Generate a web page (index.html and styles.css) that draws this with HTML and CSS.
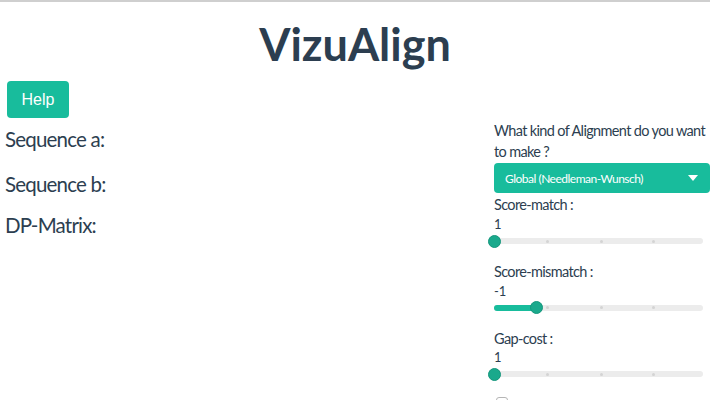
FILE: index.html
```html
<!DOCTYPE html>
<html>
<head>
<meta charset="utf-8">
<link rel="stylesheet" href="styles.css">
</head>
<body>
<h1 class="title">VizuAlign</h1>
<div class="main">
  <div class="left">
    <button class="help-btn">Help</button>
    <div class="seq seq-a">Sequence a:</div>
    <div class="seq seq-b">Sequence b:</div>
    <div class="seq seq-dp">DP-Matrix:</div>
  </div>
  <div class="right">
    <div class="question">What kind of Alignment do you want to make ?</div>
    <div class="select">
      <span>Global (Needleman-Wunsch)</span>
      <svg class="caret" width="10" height="6" viewBox="0 0 10 6"><path d="M0 0 L10 0 L5 6 Z" fill="#fff"/></svg>
    </div>
    <div class="field first">
      <div class="label">Score-match :</div>
      <div class="value">1</div>
      <div class="slider">
        <div class="track"></div>
        <span class="tick t1"></span><span class="tick t2"></span><span class="tick t3"></span>
        <span class="handle" style="left:0.8px"></span>
      </div>
    </div>
    <div class="field">
      <div class="label">Score-mismatch :</div>
      <div class="value">-1</div>
      <div class="slider">
        <div class="track"></div>
        <span class="fill" style="width:42px"></span>
        <span class="tick t1"></span><span class="tick t2"></span><span class="tick t3"></span>
        <span class="handle" style="left:42.2px"></span>
      </div>
    </div>
    <div class="field">
      <div class="label">Gap-cost :</div>
      <div class="value">1</div>
      <div class="slider">
        <div class="track"></div>
        <span class="tick t1"></span><span class="tick t2"></span><span class="tick t3"></span>
        <span class="handle" style="left:0.8px"></span>
      </div>
    </div>
    <div class="check"><span class="box"></span></div>
  </div>
</div>
</body>
</html>
```

FILE: styles.css
```css
html, body {
  margin: 0;
  padding: 0;
  background: #fff;
  overflow: hidden;
}
body {
  border-top: 2px solid #cfcfcf;
  font-family: Lato, "Open Sans", sans-serif;
  color: #2c3e50;
}
.title {
  margin: 17px 0 0;
  height: 50px;
  line-height: 50px;
  font-size: 45px;
  font-weight: 700;
  text-align: center;
  color: #2c3e50;
}
.main {
  display: grid;
  grid-template-columns: 1fr 216px;
  margin-top: 12px;
}
.left {
  padding-left: 5px;
  display: flex;
  flex-direction: column;
  align-items: flex-start;
}
.help-btn {
  margin-left: 2px;
  width: 62px;
  height: 37px;
  border: none;
  border-radius: 4px;
  background: #18bc9c;
  color: #fff;
  font-family: "Liberation Sans", Arial, sans-serif;
  font-size: 16px;
  padding: 0;
}
.seq {
  font-size: 20.5px;
  line-height: 24px;
  letter-spacing: -0.8px;
  color: #2c3e50;
}
.seq-a { margin-top: 8.8px; }
.seq-b { margin-top: 21px; }
.seq-dp { margin-top: 17.6px; }

.right {
  padding-top: 39px;
  font-size: 14.5px;
  letter-spacing: -0.65px;
}
.question {
  line-height: 21.4px;
}
.select {
  margin-top: 0.5px;
  height: 29.4px;
  border-radius: 4px;
  background: #18bc9c;
  color: #fff;
  display: flex;
  align-items: center;
  justify-content: space-between;
  padding: 0 12px 0 11px;
  font-size: 12px;
  letter-spacing: -0.5px;
}
.caret { display: block; }
.field {
  margin-top: 11.9px;
}
.field.first {
  margin-top: 1.5px;
}
.label {
  line-height: 21.7px;
}
.value {
  font-size: 13px;
  line-height: 17.1px;
  letter-spacing: 0;
}
.slider {
  position: relative;
  width: 209px;
  height: 16px;
  padding-top: 5px;
  box-sizing: border-box;
}
.track {
  height: 6px;
  border-radius: 3px;
  background: #ececec;
}
.fill {
  position: absolute;
  left: 0;
  top: 5px;
  height: 6px;
  border-radius: 3px 0 0 3px;
  background: #18bc9c;
}
.tick {
  position: absolute;
  top: 6.5px;
  width: 3px;
  height: 3px;
  border-radius: 50%;
  background: #d4d4d4;
}
.t1 { left: 52.2px; }
.t2 { left: 105.5px; }
.t3 { left: 157.8px; }
.handle {
  position: absolute;
  top: 1.5px;
  width: 13px;
  height: 13px;
  margin-left: -6.5px;
  box-sizing: border-box;
  border-radius: 50%;
  background: #1aa98c;
  border: 1px solid #15967c;
}
.check {
  display: flex;
  margin-top: 15.1px;
  padding-left: 2px;
}
.box {
  width: 12px;
  height: 12px;
  box-sizing: border-box;
  border: 1px solid #b5b5b5;
  border-radius: 3px;
  background: #fff;
}
```
